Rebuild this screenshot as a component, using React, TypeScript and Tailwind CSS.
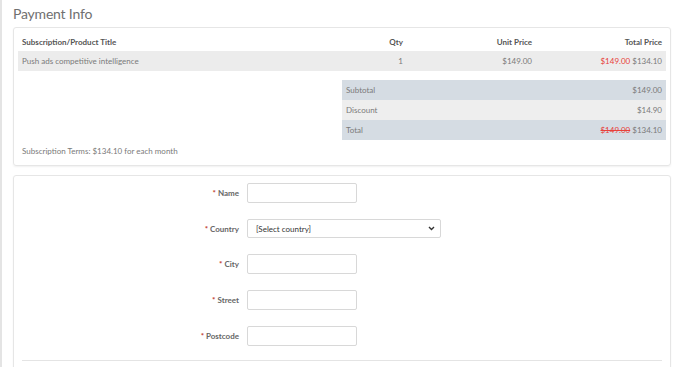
import React from 'react';

const FONT = { fontFamily: 'Lato, "Open Sans", sans-serif' };

const FIELDS = ['Name', 'Country', 'City', 'Street', 'Postcode'];

function Price({ old, now, struck }: { old: string; now: string; struck?: boolean }) {
  return (
    <span>
      <span className={struck ? 'text-[#e8403a] line-through decoration-[#e8403a]' : 'text-[#e8403a]'}>{old}</span> {now}
    </span>
  );
}

export default function App() {
  return (
    <div className="w-[678px] h-[367px] overflow-hidden bg-white border-l-2 border-[#e4e4e4] text-[#7a7a7a]" style={FONT}>
      <div className="pl-[11px] pr-[7px]">
        <h1 className="text-[14px] leading-[26px] pt-[1px] text-[#707070] tracking-[-0.2px]">Payment Info</h1>

        <div className="border border-[#e6e6e6] rounded-[3px] shadow-[0_1px_2px_rgba(0,0,0,0.06)] px-[4px] pt-[6px] pb-[8px] text-[8px]">
          <div className="grid grid-cols-[292px_97px_129px_130px] font-bold text-[#555] h-[16px] items-center">
            <div className="pl-[4px]">Subscription/Product Title</div>
            <div className="text-right pr-[4px]">Qty</div>
            <div className="text-right pr-[4px]">Unit Price</div>
            <div className="text-right pr-[4px]">Total Price</div>
          </div>
          <div className="grid grid-cols-[292px_97px_129px_130px] bg-[#ececec] h-[20px] items-center mt-[1px]">
            <div className="pl-[4px]">Push ads competitive intelligence</div>
            <div className="text-right pr-[4px]">1</div>
            <div className="text-right pr-[4px]">$149.00</div>
            <div className="text-right pr-[4px]">
              <Price old="$149.00" now="$134.10" />
            </div>
          </div>

          <div className="flex justify-end mt-[9px]">
            <div className="w-[324px]">
              <div className="grid grid-cols-[194px_130px] bg-[#d5dce3] h-[20px] items-center">
                <div className="pl-[4px]">Subtotal</div>
                <div className="text-right pr-[4px]">$149.00</div>
              </div>
              <div className="grid grid-cols-[194px_130px] bg-[#eeeeee] h-[20px] items-center">
                <div className="pl-[4px]">Discount</div>
                <div className="text-right pr-[4px]">$14.90</div>
              </div>
              <div className="grid grid-cols-[194px_130px] bg-[#d5dce3] h-[20px] items-center">
                <div className="pl-[4px]">Total</div>
                <div className="text-right pr-[4px]">
                  <Price old="$149.00" now="$134.10" struck />
                </div>
              </div>
            </div>
          </div>

          <p className="pl-[4px] mt-[5px] leading-[12px]">Subscription Terms: $134.10 for each month</p>
        </div>

        <div className="mt-[9px] border border-[#e6e6e6] rounded-[3px] shadow-[0_1px_2px_rgba(0,0,0,0.06)] px-[8px] pt-[7px] h-[200px]">
          <div className="flex flex-col gap-[16px]">
            {FIELDS.map((f) => (
              <div key={f} className="flex items-start">
                <label className="w-[225px] text-right pr-[8px] pt-[4px] text-[8px] font-bold text-[#666]">
                  <span className="text-[#c0392b]">*</span> {f}
                </label>
                {f === 'Country' ? (
                  <div className="w-[194px] h-[19px] border border-[#d8d8d8] rounded-[2px] flex items-center justify-between pl-[8px] pr-[5px] text-[8px] text-[#333]">
                    <span>[Select country]</span>
                    <svg width="7" height="5" viewBox="0 0 7 5">
                      <path d="M1 1l2.5 2.5L6 1" stroke="#333" strokeWidth="1.4" fill="none" />
                    </svg>
                  </div>
                ) : (
                  <input className="w-[110px] h-[20px] border border-[#d8d8d8] rounded-[2px] outline-none" />
                )}
              </div>
            ))}
          </div>
          <div className="mt-[14px] border-t border-[#e4e4e4]" />
        </div>
      </div>
    </div>
  );
}
